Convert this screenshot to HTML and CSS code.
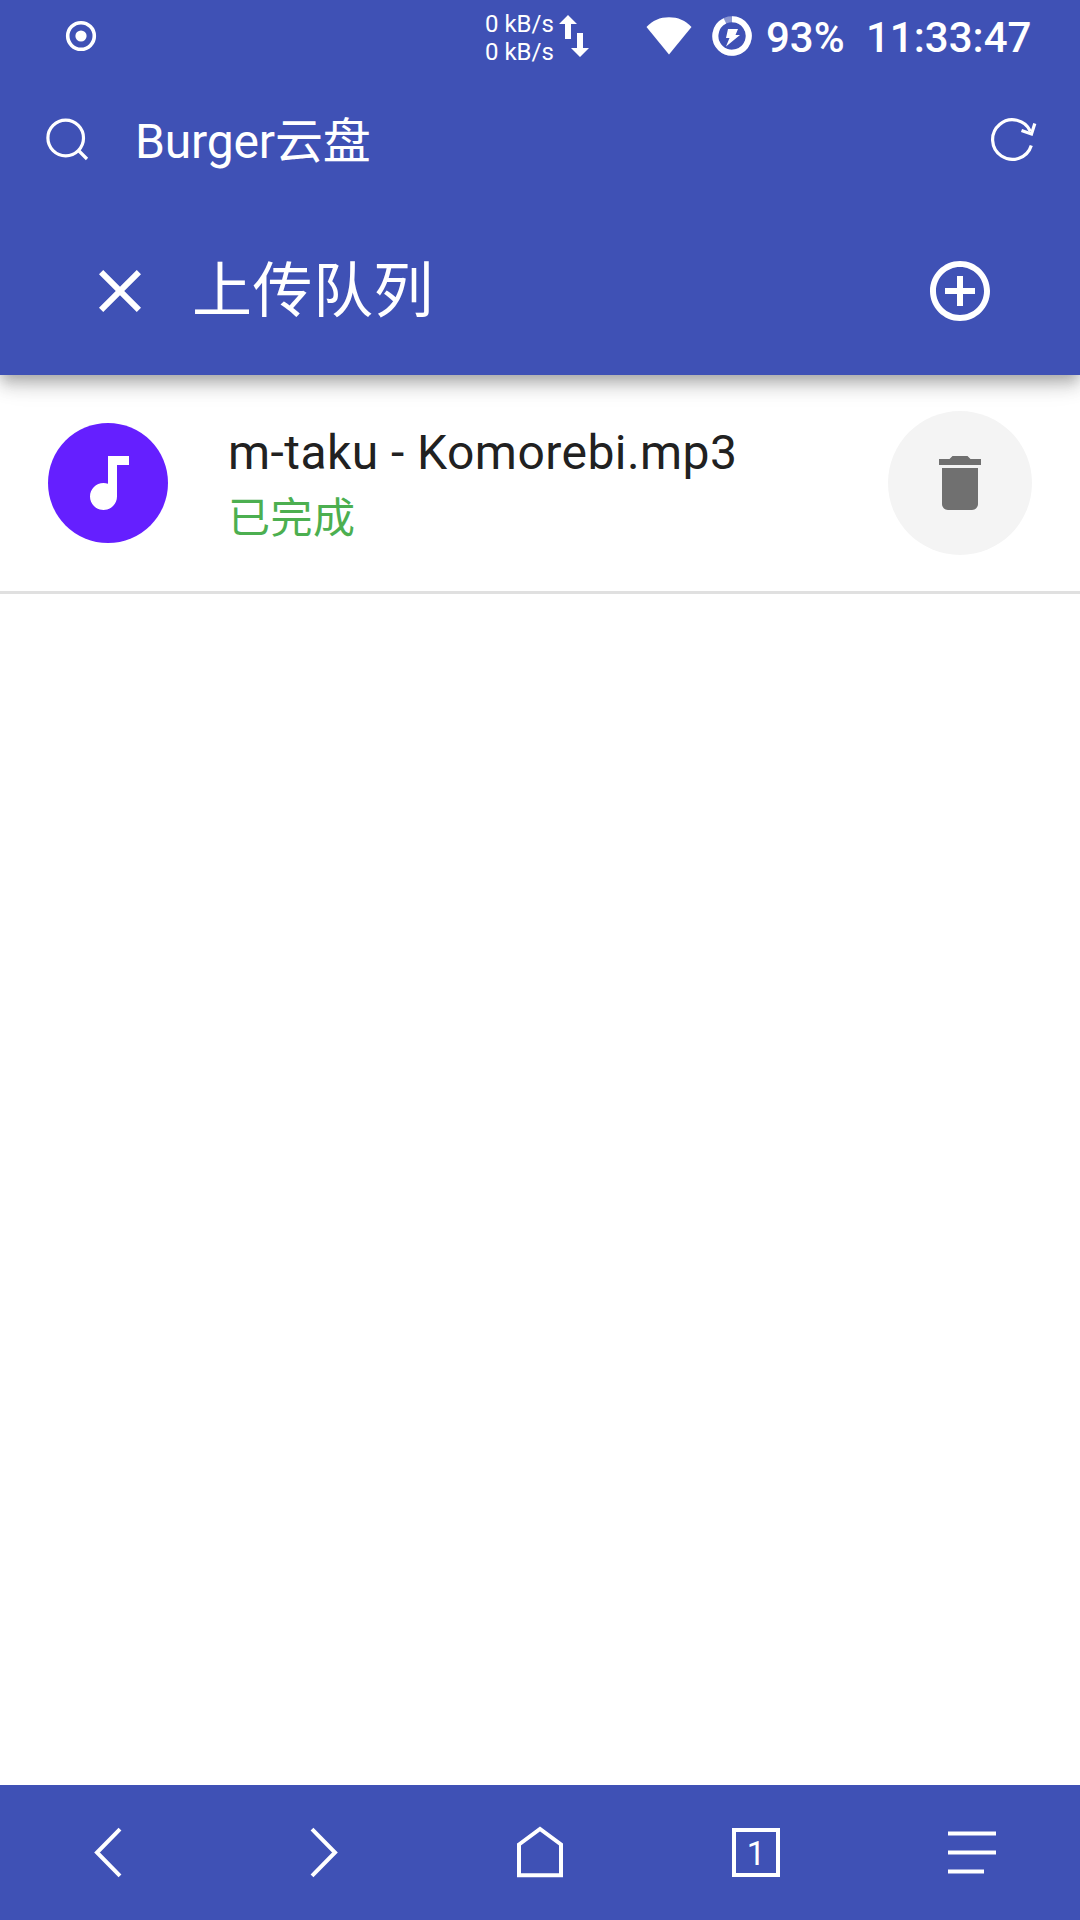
FILE: index.html
```html
<!DOCTYPE html>
<html lang="zh-CN">
<head>
    <meta charset="UTF-8">
    <meta name="viewport" content="width=device-width, initial-scale=1.0">
    <title>Burger云盘</title>
    <link rel="stylesheet" href="styles.css">
</head>
<body>

<div class="status-bar">
    <svg class="record" width="32" height="32" viewBox="0 0 32 32">
        <circle cx="16" cy="16" r="13.3" fill="none" stroke="#fff" stroke-width="3.6"/>
        <circle cx="16" cy="16" r="5.6" fill="#fff"/>
    </svg>
    <div class="speed">
        <span>0 kB/s</span>
        <span>0 kB/s</span>
    </div>
    <svg class="arrows" width="30" height="44" viewBox="0 0 30 44" fill="#fff">
        <path d="M9 1l9 9h-6v15H6V10H0z"/>
        <path d="M18 19h6v15h6l-9 9-9-9h6z"/>
    </svg>
    <svg class="wifi" width="46" height="38" viewBox="0 0 46 38" fill="#fff">
        <path d="M23 37.5L.5 10C6.5 3.500 14 .3 23 .3S39.500 3.500 45.500 10z"/>
    </svg>
    <svg class="battery" width="40" height="40" viewBox="0 0 40 40">
        <circle cx="20" cy="20" r="16.700" fill="none" stroke="#fff" stroke-opacity=".4" stroke-width="6"/>
        <path d="M20 3.300A16.700 16.700 0 1 1 12.900 4.900" fill="none" stroke="#fff" stroke-width="6"/>
        <path d="M16 13h10l-2.500 6H28L14 30.500l3.500-8.500H14z" fill="#fff"/>
    </svg>
    <span class="percent">93%</span>
    <span class="clock">11:33:47</span>
</div>

<div class="address-bar">
    <svg class="search" width="46" height="46" viewBox="0 0 46 46" fill="none" stroke="#fff" stroke-width="3.200">
        <circle cx="22.700" cy="21" r="17.800"/>
        <path d="M35.500 33.500l8.500 8.500"/>
    </svg>
    <span class="site">Burger云盘</span>
    <svg class="refresh" width="48" height="48" viewBox="0 0 48 48" fill="none" stroke="#fff" stroke-width="3.200">
        <path d="M42.300 29.500A19.800 19.800 0 1 1 41.500 15.500"/>
        <path d="M32.500 14.500l10 3.500 3.300-10.500"/>
    </svg>
</div>

<div class="toolbar">
    <svg width="72" height="72" viewBox="0 0 24 24" fill="#fff">
        <path d="M19 6.410L17.590 5 12 10.590 6.410 5 5 6.410 10.590 12 5 17.590 6.410 19 12 13.410 17.590 19 19 17.590 13.410 12z"/>
    </svg>
    <span class="title">上传队列</span>
    <svg width="72" height="72" viewBox="0 0 24 24" fill="#fff">
        <path d="M13 7h-2v4H7v2h4v4h2v-4h4v-2h-4V7zm-1-5C6.480 2 2 6.480 2 12s4.480 10 10 10 10-4.480 10-10S17.520 2 12 2zm0 18c-4.410 0-8-3.590-8-8s3.590-8 8-8 8 3.590 8 8-3.590 8-8 8z"/>
    </svg>
</div>

<div class="list">
    <div class="item">
        <div class="avatar">
            <svg width="72" height="72" viewBox="0 0 24 24" fill="#fff">
                <path d="M12 3v9.280c-.470-.170-.970-.280-1.500-.280C8.010 12 6 14.010 6 16.500S8.010 21 10.500 21s4.500-2.010 4.500-4.500V6h4V3h-7z"/>
            </svg>
        </div>
        <div class="info">
            <span class="name">m-taku - Komorebi.mp3</span>
            <span class="state">已完成</span>
        </div>
        <div class="delete">
            <svg width="72" height="72" viewBox="0 0 24 24" fill="#707070">
                <path d="M6 19c0 1.100.9 2 2 2h8c1.100 0 2-.9 2-2V7H6v12zM19 4h-3.500l-1-1h-5l-1 1H5v2h14V4z"/>
            </svg>
        </div>
    </div>
</div>

<div class="bottom-nav">
    <div class="tab">
        <svg width="54" height="55" viewBox="0 0 54 55">
            <path d="M39 4.200L16 27.500l23 23.300"/>
        </svg>
    </div>
    <div class="tab">
        <svg width="54" height="55" viewBox="0 0 54 55">
            <path d="M15 4.200l23 23.300-23 23.300"/>
        </svg>
    </div>
    <div class="tab">
        <svg width="54" height="55" viewBox="0 0 54 55">
            <path d="M6 19.500L27 4l21 15.500v30.800H6z"/>
        </svg>
    </div>
    <div class="tab">
        <div class="count">1</div>
    </div>
    <div class="tab">
        <svg width="54" height="55" viewBox="0 0 54 55">
            <path d="M3 8.500h48M3 27.500h48M3 46.500h36"/>
        </svg>
    </div>
</div>

</body>
</html>
```
FILE: styles.css
```css
body {
    font-family: Roboto, "Noto Sans CJK SC", sans-serif;
    background-color: white;
    margin: 0;
    height: 1920px;
    display: flex;
    flex-direction: column;
    overflow: hidden;
}
svg {
    display: block;
    flex-shrink: 0;
}
.status-bar {
    height: 72px;
    box-sizing: border-box;
    padding-left: 65px;
    background-color: #3f51b5;
    color: white;
    display: flex;
    align-items: center;
    white-space: nowrap;
}
.speed {
    width: 74px;
    margin-left: 388px;
    padding-top: 3px;
    display: flex;
    flex-direction: column;
    font-size: 24px;
    line-height: 28px;
}
.wifi {
    margin-left: 57px;
}
.battery {
    margin-left: 20px;
}
.percent, .clock {
    padding-top: 3px;
    font-size: 42px;
    font-weight: 500;
    line-height: 69px;
}
.percent {
    width: 100px;
    margin-left: 14px;
}
.address-bar {
    height: 135px;
    box-sizing: border-box;
    padding: 0 43px;
    background-color: #3f51b5;
    color: white;
    display: flex;
    align-items: center;
}
.site {
    flex: 1;
    margin-left: 46px;
    padding-top: 4px;
    font-size: 48px;
    letter-spacing: -0.15px;
    line-height: 60px;
}
.toolbar {
    height: 168px;
    box-sizing: border-box;
    padding: 0 84px;
    background-color: #3f51b5;
    color: white;
    display: flex;
    align-items: center;
    position: relative;
    z-index: 1;
    box-shadow: 0 6px 12px -3px rgba(0, 0, 0, 0.2), 0 12px 15px 0 rgba(0, 0, 0, 0.14), 0 3px 30px 0 rgba(0, 0, 0, 0.12);
    clip-path: inset(0 0 -60px 0);
}
.title {
    flex: 1;
    margin-left: 36px;
    padding-top: 2px;
    font-size: 60px;
    letter-spacing: 0.45px;
    line-height: 96px;
}
.list {
    flex: 1;
}
.item {
    height: 216px;
    padding: 0 48px;
    display: flex;
    align-items: center;
    border-bottom: 3px solid #e0e0e0;
}
.avatar, .delete {
    border-radius: 50%;
    display: flex;
    align-items: center;
    justify-content: center;
}
.avatar {
    width: 120px;
    height: 120px;
    background-color: #651fff;
}
.delete {
    width: 144px;
    height: 144px;
    background-color: #f4f4f4;
}
.info {
    flex: 1;
    margin-left: 60px;
    display: flex;
    flex-direction: column;
}
.name {
    font-size: 48px;
    line-height: 72px;
    letter-spacing: 0.45px;
    color: #212121;
}
.state {
    font-size: 42px;
    line-height: 60px;
    letter-spacing: 0.45px;
    color: #4caf50;
}
.bottom-nav {
    height: 135px;
    background-color: #3f51b5;
    display: flex;
}
.tab {
    flex: 1;
    display: flex;
    align-items: center;
    justify-content: center;
}
.tab svg {
    fill: none;
    stroke: white;
    stroke-width: 4;
}
.count {
    width: 48px;
    height: 49px;
    box-sizing: border-box;
    border: 4px solid white;
    color: white;
    font-size: 33px;
    line-height: 43px;
    text-align: center;
}
```
